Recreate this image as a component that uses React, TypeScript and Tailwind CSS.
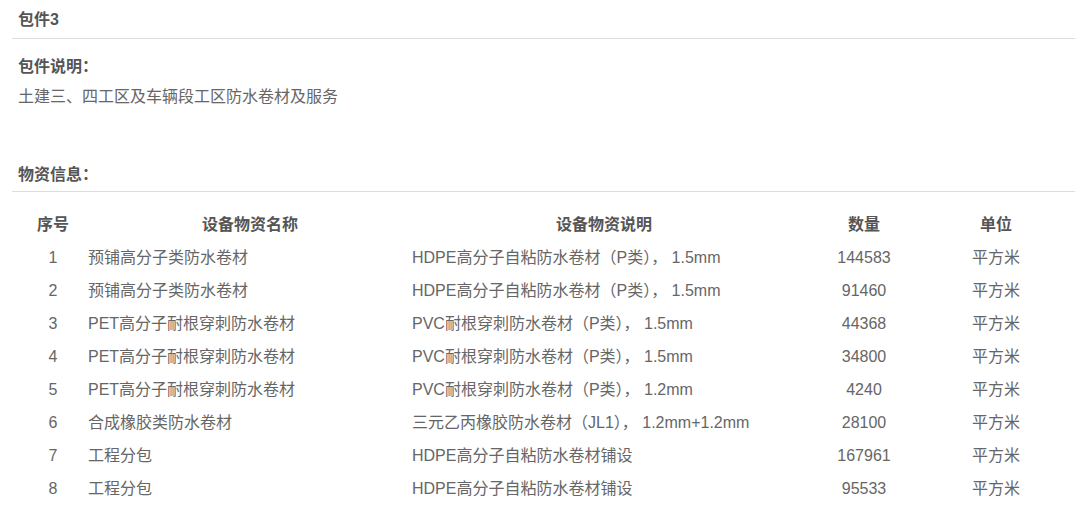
import React from 'react';

interface Row {
  no: number;
  name: string;
  desc: string;
  qty: string;
  unit: string;
}

const rows: Row[] = [
  { no: 1, name: '预铺高分子类防水卷材', desc: 'HDPE高分子自粘防水卷材（P类）， 1.5mm', qty: '144583', unit: '平方米' },
  { no: 2, name: '预铺高分子类防水卷材', desc: 'HDPE高分子自粘防水卷材（P类）， 1.5mm', qty: '91460', unit: '平方米' },
  { no: 3, name: 'PET高分子耐根穿刺防水卷材', desc: 'PVC耐根穿刺防水卷材（P类）， 1.5mm', qty: '44368', unit: '平方米' },
  { no: 4, name: 'PET高分子耐根穿刺防水卷材', desc: 'PVC耐根穿刺防水卷材（P类）， 1.5mm', qty: '34800', unit: '平方米' },
  { no: 5, name: 'PET高分子耐根穿刺防水卷材', desc: 'PVC耐根穿刺防水卷材（P类）， 1.2mm', qty: '4240', unit: '平方米' },
  { no: 6, name: '合成橡胶类防水卷材', desc: '三元乙丙橡胶防水卷材（JL1）， 1.2mm+1.2mm', qty: '28100', unit: '平方米' },
  { no: 7, name: '工程分包', desc: 'HDPE高分子自粘防水卷材铺设', qty: '167961', unit: '平方米' },
  { no: 8, name: '工程分包', desc: 'HDPE高分子自粘防水卷材铺设', qty: '95533', unit: '平方米' },
];

const App: React.FC = () => {
  return (
    <div className="w-[1080px] h-[511px] bg-white pl-[12px] pr-[5px] text-[#666] font-['Liberation_Sans','Noto_Sans_CJK_SC',sans-serif] text-[16px] overflow-hidden">
      <div className="h-[39px] pt-[2px] px-[6px] flex items-center border-b border-[#ddd] font-bold text-[#555]">包件3</div>

      <div className="mt-[13px] px-[6px] leading-[30px]">
        <div className="font-bold text-[#555]">包件说明：</div>
        <div>土建三、四工区及车辆段工区防水卷材及服务</div>
      </div>

      <div className="mt-[47px] h-[33px] px-[6px] flex items-center border-b border-[#ddd] font-bold text-[#555]">物资信息：</div>

      <table className="mt-[16px] ml-[6px] w-[1042px] table-fixed border-collapse">
        <colgroup>
          <col className="w-[70px]" />
          <col className="w-[324px]" />
          <col className="w-[384px]" />
          <col className="w-[136px]" />
          <col className="w-[128px]" />
        </colgroup>
        <thead>
          <tr className="h-[33px] font-bold text-[#555]">
            <th className="text-center p-0">序号</th>
            <th className="text-center p-0">设备物资名称</th>
            <th className="text-center p-0">设备物资说明</th>
            <th className="text-center p-0">数量</th>
            <th className="text-center p-0">单位</th>
          </tr>
        </thead>
        <tbody>
          {rows.map((r) => (
            <tr key={r.no} className="h-[33px]">
              <td className="text-center p-0">{r.no}</td>
              <td className="text-left p-0 whitespace-nowrap">{r.name}</td>
              <td className="text-left p-0 whitespace-nowrap">{r.desc}</td>
              <td className="text-center p-0">{r.qty}</td>
              <td className="text-center p-0">{r.unit}</td>
            </tr>
          ))}
        </tbody>
      </table>
    </div>
  );
};

export default App;
